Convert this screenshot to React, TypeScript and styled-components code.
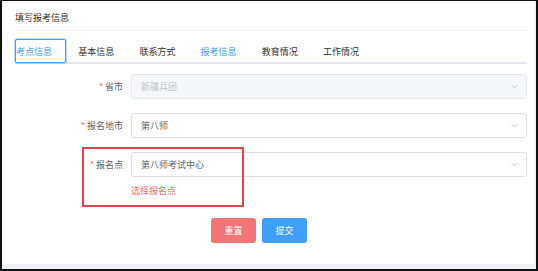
import { createGlobalStyle } from 'styled-components';
import styled from 'styled-components';

const Global = createGlobalStyle`
  html, body {
    margin: 0;
    padding: 0;
    background: #ffffff;
  }
  * {
    box-sizing: border-box;
  }
  body {
    font-family: "Noto Sans CJK SC", "Noto Sans", sans-serif;
    font-size: 9px;
  }
`;

const Frame = styled.div`
  width: 538px;
  height: 271px;
  border-style: solid;
  border-color: #111;
  border-width: 1px 2px 2px 2px;
  background: #f0f2f5;
  padding: 0 2px 5px 1px;
  display: flex;
`;

const Card = styled.div`
  flex: 1;
  background: #ffffff;
  padding: 0 7px 0 12px;
  display: flex;
  flex-direction: column;
  position: relative;
`;

const Header = styled.div`
  height: 30px;
  display: flex;
  align-items: center;
  border-bottom: 1px solid #ebeef5;
  color: #303133;
  padding-top: 3px;
`;

const Tabs = styled.div`
  margin-top: 8px;
  height: 25px;
  display: flex;
  border-bottom: 2px solid #e4e7ed;
`;

const Tab = styled.div<{ $active?: boolean; $focus?: boolean; $first?: boolean }>`
  height: 24px;
  padding: 0 12.6px 0 ${(p) => (p.$first ? '0' : '12.6px')};
  display: flex;
  align-items: center;
  color: ${(p) => (p.$active || p.$focus ? '#409eff' : '#303133')};
  border: ${(p) => (p.$focus ? '1px solid #409eff' : 'none')};
  border-radius: ${(p) => (p.$focus ? '2px' : '0')};
  box-shadow: ${(p) => (p.$focus ? '0 0 0 1px rgba(64,158,255,0.35)' : 'none')};
  margin-bottom: -2px;
`;

const Form = styled.div`
  margin-top: 10px;
  display: flex;
  flex-direction: column;
  position: relative;
`;

const Row = styled.div`
  display: flex;
  margin-bottom: 14px;
`;

const Label = styled.div`
  width: 116px;
  height: 25px;
  padding-right: 8px;
  display: flex;
  align-items: center;
  justify-content: flex-end;
  color: #606266;
`;

const Star = styled.span`
  color: #f56c6c;
  margin-right: 2px;
`;

const Field = styled.div`
  flex: 1;
  display: flex;
  flex-direction: column;
`;

const Select = styled.div<{ $disabled?: boolean }>`
  height: 25px;
  border: 1px solid ${(p) => (p.$disabled ? '#e4e7ed' : '#dcdfe6')};
  background: ${(p) => (p.$disabled ? '#f5f7fa' : '#ffffff')};
  color: ${(p) => (p.$disabled ? '#c0c4cc' : '#606266')};
  border-radius: 3px;
  padding: 0 9px;
  display: flex;
  align-items: center;
  justify-content: space-between;
`;

const Arrow = styled.svg`
  width: 7px;
  height: 5px;
  margin-right: -1px;
`;

const Error = styled.div`
  color: #f56c6c;
  font-size: 9px;
  margin-top: 9px;
  line-height: 10px;
`;

const Actions = styled.div`
  display: flex;
  gap: 6px;
  padding-left: 196px;
  margin-top: 8px;
`;

const Button = styled.div<{ $kind: 'danger' | 'primary' }>`
  width: 45px;
  height: 25px;
  border-radius: 3px;
  color: #ffffff;
  background: ${(p) => (p.$kind === 'danger' ? '#f47575' : '#409eff')};
  display: flex;
  align-items: center;
  justify-content: center;
`;

const Highlight = styled.div`
  position: absolute;
  left: 67px;
  top: 73px;
  width: 162px;
  height: 60px;
  border: 2px solid #e0474c;
  pointer-events: none;
`;

const Chevron = () => (
  <Arrow viewBox="0 0 7 5">
    <path d="M0.5 1 L3.5 4 L6.5 1" fill="none" stroke="#c0c4cc" strokeWidth="0.9" />
  </Arrow>
);

const tabs = ['考点信息', '基本信息', '联系方式', '报考信息', '教育情况', '工作情况'];

export default function App() {
  return (
    <>
      <Global />
      <Frame>
        <Card>
          <Header>填写报考信息</Header>
          <Tabs>
            {tabs.map((t, i) => (
              <Tab key={t} $first={i === 0} $focus={i === 0} $active={i === 3}>
                {t}
              </Tab>
            ))}
          </Tabs>
          <Form>
            <Row>
              <Label><Star>*</Star>省市</Label>
              <Field>
                <Select $disabled>
                  <span>新疆兵团</span>
                  <Chevron />
                </Select>
              </Field>
            </Row>
            <Row>
              <Label><Star>*</Star>报名地市</Label>
              <Field>
                <Select>
                  <span>第八师</span>
                  <Chevron />
                </Select>
              </Field>
            </Row>
            <Row>
              <Label><Star>*</Star>报名点</Label>
              <Field>
                <Select>
                  <span>第八师考试中心</span>
                  <Chevron />
                </Select>
                <Error>选择报名点</Error>
              </Field>
            </Row>
            <Actions>
              <Button $kind="danger">重置</Button>
              <Button $kind="primary">提交</Button>
            </Actions>
            <Highlight />
          </Form>
        </Card>
      </Frame>
    </>
  );
}
